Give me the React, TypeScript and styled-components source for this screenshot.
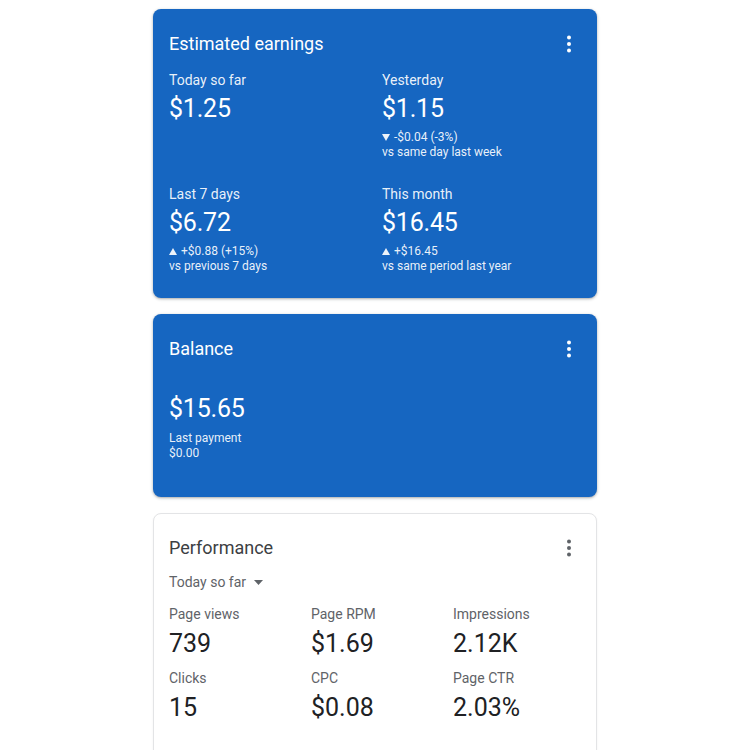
import React from "react";
import styled, { createGlobalStyle } from "styled-components";

const GlobalStyle = createGlobalStyle`
  html, body {
    margin: 0;
    padding: 0;
    background: #ffffff;
    overflow: hidden;
  }
  body {
    font-family: Roboto, "Liberation Sans", Arial, sans-serif;
    -webkit-font-smoothing: antialiased;
  }
`;

const Page = styled.main`
  width: 444px;
  margin: 0 auto;
  padding-top: 9px;
  display: flex;
  flex-direction: column;
  gap: 16px;
`;

const Card = styled.section<{ $tone: "blue" | "white" }>`
  box-sizing: border-box;
  border-radius: 8px;
  padding: ${(p) => (p.$tone === "blue" ? "23px 16px 24px 16px" : "22px 15px 40px 15px")};
  background: ${(p) => (p.$tone === "blue" ? "#1666c1" : "#ffffff")};
  color: ${(p) => (p.$tone === "blue" ? "#ffffff" : "#202124")};
  border: ${(p) => (p.$tone === "blue" ? "none" : "1px solid #e3e4e6")};
  box-shadow: ${(p) =>
    p.$tone === "blue"
      ? "0 1px 2px rgba(60, 64, 67, 0.3), 0 1px 3px 1px rgba(60, 64, 67, 0.12)"
      : "0 1px 2px rgba(60, 64, 67, 0.08)"};
`;

const Header = styled.header<{ $gap: number }>`
  display: flex;
  align-items: center;
  justify-content: space-between;
  height: 24px;
  margin-bottom: ${(p) => p.$gap}px;
`;

const Title = styled.h2<{ $dark?: boolean }>`
  margin: 0;
  font-size: 18px;
  line-height: 24px;
  font-weight: 400;
  color: ${(p) => (p.$dark ? "#3c4043" : "#ffffff")};
`;

const MenuButton = styled.button<{ $dark?: boolean }>`
  width: 24px;
  height: 24px;
  padding: 0;
  border: 0;
  background: transparent;
  color: ${(p) => (p.$dark ? "#5f6368" : "#ffffff")};
  display: flex;
  align-items: center;
  justify-content: center;
`;

const EarningsGrid = styled.div`
  display: grid;
  grid-template-columns: 213px 1fr;
  row-gap: 24px;
`;

const Stat = styled.div`
  display: flex;
  flex-direction: column;
`;

const Label = styled.div`
  font-size: 14px;
  line-height: 20px;
  color: rgba(255, 255, 255, 0.92);
`;

const Amount = styled.div<{ $top: number }>`
  font-size: 25px;
  line-height: 32px;
  margin-top: ${(p) => p.$top}px;
  letter-spacing: -0.2px;
`;

const Note = styled.div<{ $top: number }>`
  margin-top: ${(p) => p.$top}px;
  font-size: 12px;
  line-height: 15px;
  color: rgba(255, 255, 255, 0.92);
`;

const NoteLine = styled.div`
  display: flex;
  align-items: center;
`;

const Arrow = styled.svg`
  width: 8px;
  height: 7px;
  margin-right: 4px;
  fill: currentColor;
`;

const RangePicker = styled.button`
  display: flex;
  align-items: center;
  padding: 0;
  margin-bottom: 12px;
  border: 0;
  background: transparent;
  font-family: inherit;
  font-size: 14px;
  line-height: 20px;
  color: #5f6368;
`;

const Caret = styled.svg`
  width: 9px;
  height: 5px;
  margin-left: 8px;
  fill: #5f6368;
`;

const MetricGrid = styled.div`
  display: grid;
  grid-template-columns: repeat(3, 142px);
  row-gap: 8px;
`;

const MetricLabel = styled.div`
  font-size: 14px;
  line-height: 20px;
  color: #5f6368;
`;

const MetricValue = styled.div`
  margin-top: 4px;
  font-size: 25px;
  line-height: 32px;
  color: #202124;
`;

const MoreIcon = () => (
  <svg width="24" height="24" viewBox="0 0 24 24" fill="currentColor">
    <circle cx="12" cy="5.5" r="2" />
    <circle cx="12" cy="12" r="2" />
    <circle cx="12" cy="18.5" r="2" />
  </svg>
);

const Trend = ({ dir, text }: { dir: "up" | "down"; text: string }) => (
  <NoteLine>
    <Arrow viewBox="0 0 8 7">
      {dir === "up" ? <polygon points="4,0 8,7 0,7" /> : <polygon points="0,0 8,0 4,7" />}
    </Arrow>
    {text}
  </NoteLine>
);

type Earning = {
  label: string;
  amount: string;
  trend?: { dir: "up" | "down"; text: string; compare: string };
};

const earnings: Earning[] = [
  { label: "Today so far", amount: "$1.25" },
  {
    label: "Yesterday",
    amount: "$1.15",
    trend: { dir: "down", text: "-$0.04 (-3%)", compare: "vs same day last week" },
  },
  {
    label: "Last 7 days",
    amount: "$6.72",
    trend: { dir: "up", text: "+$0.88 (+15%)", compare: "vs previous 7 days" },
  },
  {
    label: "This month",
    amount: "$16.45",
    trend: { dir: "up", text: "+$16.45", compare: "vs same period last year" },
  },
];

const metrics = [
  { label: "Page views", value: "739" },
  { label: "Page RPM", value: "$1.69" },
  { label: "Impressions", value: "2.12K" },
  { label: "Clicks", value: "15" },
  { label: "CPC", value: "$0.08" },
  { label: "Page CTR", value: "2.03%" },
];

export default function App() {
  return (
    <>
      <GlobalStyle />
      <Page>
        <Card $tone="blue">
          <Header $gap={14}>
            <Title>Estimated earnings</Title>
            <MenuButton aria-label="More options">
              <MoreIcon />
            </MenuButton>
          </Header>
          <EarningsGrid>
            {earnings.map((e) => (
              <Stat key={e.label}>
                <Label>{e.label}</Label>
                <Amount $top={3}>{e.amount}</Amount>
                {e.trend && (
                  <Note $top={5}>
                    <Trend dir={e.trend.dir} text={e.trend.text} />
                    <div>{e.trend.compare}</div>
                  </Note>
                )}
              </Stat>
            ))}
          </EarningsGrid>
        </Card>

        <Card $tone="blue" style={{ paddingBottom: 36 }}>
          <Header $gap={32}>
            <Title>Balance</Title>
            <MenuButton aria-label="More options">
              <MoreIcon />
            </MenuButton>
          </Header>
          <Stat>
            <Amount $top={0}>$15.65</Amount>
            <Note $top={6}>
              <div>Last payment</div>
              <div>$0.00</div>
            </Note>
          </Stat>
        </Card>

        <Card $tone="white">
          <Header $gap={12}>
            <Title $dark>Performance</Title>
            <MenuButton $dark aria-label="More options">
              <MoreIcon />
            </MenuButton>
          </Header>
          <RangePicker>
            Today so far
            <Caret viewBox="0 0 9 5">
              <polygon points="0,0 9,0 4.5,5" />
            </Caret>
          </RangePicker>
          <MetricGrid>
            {metrics.map((m) => (
              <div key={m.label}>
                <MetricLabel>{m.label}</MetricLabel>
                <MetricValue>{m.value}</MetricValue>
              </div>
            ))}
          </MetricGrid>
        </Card>
      </Page>
    </>
  );
}
